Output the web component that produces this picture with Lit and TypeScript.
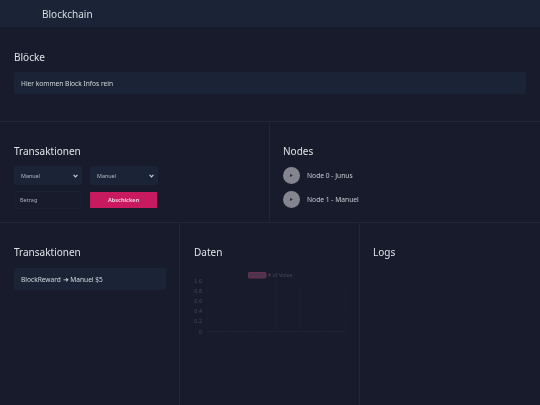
import { LitElement, html, css, svg } from "lit";
import { customElement } from "lit/decorators.js";

const ticks = ["1.0", "0.8", "0.6", "0.4", "0.2", "0"];

@customElement("app-root")
export class AppRoot extends LitElement {
  static styles = css`
    :host { display: block; width: 540px; height: 405px; overflow: hidden; background: #171b2b; color: #e6e8ec; font-family: "Noto Sans", "Open Sans", sans-serif; }
    .t { display: inline-block; will-change: transform; }
    .header { height: 27px; box-sizing: border-box; background: #1a2436; padding-left: 42px; display: flex; align-items: center; font-size: 10px; color: #d8dce2; }
    .row { display: grid; border-bottom: 1px solid #21263a; box-sizing: border-box; }
    .r1 { height: 95px; grid-template-columns: 1fr; }
    .r2 { height: 101px; grid-template-columns: 270px 270px; }
    .r3 { height: 183px; border-bottom: 0; grid-template-columns: 180px 180px 180px; }
    .cell { padding: 22px 13px 0 14px; box-sizing: border-box; border-right: 1px solid #21263a; min-width: 0; }
    .cell:last-child { border-right: 0; padding-left: 13px; }
    .r1 .cell { padding: 23px 14px 0; }
    h2 { margin: 0; font-size: 10px; line-height: 14px; font-weight: 400; color: #dfe2e7; }
    .box { margin-top: 9px; height: 22px; background: #1a2436; border-radius: 2px; padding-left: 7px; display: flex; align-items: center; font-size: 6.6px; color: #d3d7dd; }
    .r1 .box { margin-top: 8px; }
    .form { margin-top: 8px; display: grid; grid-template-columns: 68px 68px; column-gap: 8px; row-gap: 6px; }
    .sel { height: 19px; background: #1a2436; border-radius: 2px; padding: 0 4px 0 7px; display: flex; align-items: center; justify-content: space-between; font-size: 5.4px; color: #b6bac2; }
    .input { height: 18px; border: 1px solid #1b2133; border-radius: 2px; box-sizing: border-box; padding-left: 5px; display: flex; align-items: center; font-size: 5.5px; color: #a9adb6; }
    .btn { height: 16px; margin-top: 1px; width: 67px; background: #c81a5e; border-radius: 1px; display: flex; align-items: center; justify-content: center; font-size: 5.5px; font-weight: 700; color: #f2c8da; }
    .nodes { margin-top: 9px; display: flex; flex-direction: column; gap: 7px; }
    .node { display: flex; align-items: center; gap: 7px; font-size: 6.7px; color: #c9ccd3; }
    .play { width: 17px; height: 17px; border-radius: 50%; background: #84858f; display: flex; align-items: center; justify-content: center; }
    .chart { display: block; margin: 12px 0 0 -14px; }
    .chart text { font-family: "Liberation Sans", sans-serif; font-size: 5.5px; fill: #454958; }
  `;

  private chev() {
    return svg`<svg width="5" height="4" viewBox="0 0 5 4"><path d="M.6.8 2.5 2.8 4.4.8" fill="none" stroke="#cdd0d6" stroke-width="1.2"/></svg>`;
  }

  private node(name: string) {
    return html`<div class="node"><span class="play"><svg width="5" height="5" viewBox="0 0 5 5"><path d="M1 1 4 2.5 1 4Z" fill="#2b2d38"/></svg></span><span class="t">${name}</span></div>`;
  }

  render() {
    return html`
      <div class="header"><span class="t">Blockchain</span></div>
      <div class="row r1"><div class="cell">
        <h2><span class="t">Blöcke</span></h2>
        <div class="box"><span class="t">Hier kommen Block Infos rein</span></div>
      </div></div>
      <div class="row r2">
        <div class="cell">
          <h2><span class="t">Transaktionen</span></h2>
          <div class="form">
            <div class="sel"><span class="t">Manuel</span> ${this.chev()}</div>
            <div class="sel"><span class="t">Manuel</span> ${this.chev()}</div>
            <div class="input"><span class="t">Betrag</span></div>
            <div class="btn"><span class="t">Abschicken</span></div>
          </div>
        </div>
        <div class="cell">
          <h2><span class="t">Nodes</span></h2>
          <div class="nodes">${this.node("Node 0 - Junus")}${this.node("Node 1 - Manuel")}</div>
        </div>
      </div>
      <div class="row r3">
        <div class="cell">
          <h2><span class="t">Transaktionen</span></h2>
          <div class="box"><span class="t">BlockReward ➜ Manuel $5</span></div>
        </div>
        <div class="cell">
          <h2><span class="t">Daten</span></h2>
          <svg class="chart t" width="179" height="66" viewBox="0 0 179 66">
            <rect x="68.5" y="1.5" width="17.5" height="5.5" rx=".5" fill="#4f3450" stroke="#66304f" stroke-width="1"/>
            <text x="88" y="6"># of Votes</text>
            ${ticks.map((t, i) => svg`<text x="22" y="${12 + i * 10.1}" text-anchor="end">${t}</text>`)}
            ${[27, 50, 73, 96.5, 120, 143, 166].map((x) => svg`<line x1="${x}" x2="${x}" y1="10" y2="61" stroke="#1d2234" stroke-width=".6"/>`)}
            ${[0, 1, 2, 3, 4].map((i) => svg`<line x1="27" x2="166" y1="${10 + i * 10}" y2="${10 + i * 10}" stroke="#1d2234" stroke-width=".6"/>`)}
            <line x1="27" x2="166" y1="60.5" y2="60.5" stroke="#20253a" stroke-width=".7"/>
          </svg>
        </div>
        <div class="cell"><h2><span class="t">Logs</span></h2></div>
      </div>
    `;
  }
}
